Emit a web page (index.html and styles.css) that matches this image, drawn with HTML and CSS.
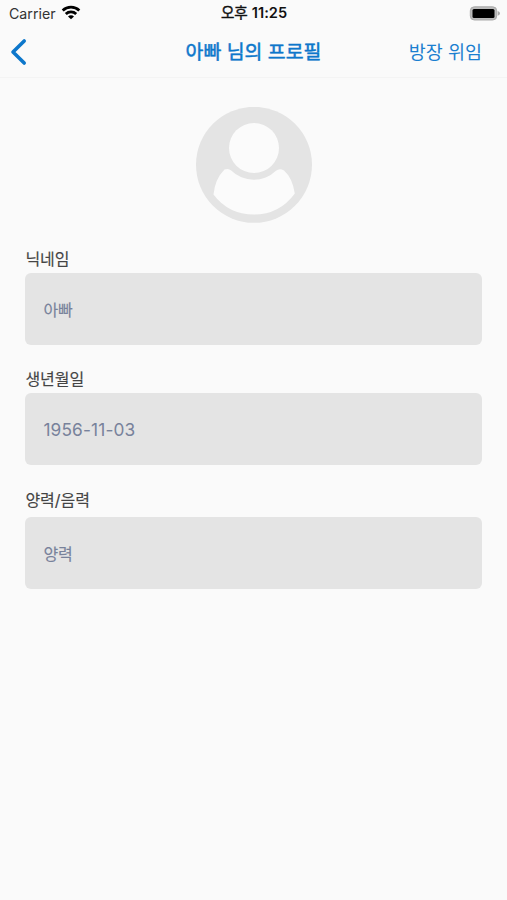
FILE: index.html
```html
<!DOCTYPE html>
<html lang="ko">
<head>
<meta charset="utf-8">
<title>프로필</title>
<link rel="stylesheet" href="styles.css">
</head>
<body>
<div class="status">
  <div class="carrier"><span>Carrier</span>
    <svg class="wifi" width="20" height="15" viewBox="0 0 20 15" fill="none" stroke="#000" stroke-width="2.8"><path d="M1.7 5.4a12 12 0 0 1 16.6 0"/><path d="M4.8 8.9a7.5 7.5 0 0 1 10.4 0"/><path d="M10 14.2 7 11.4a4.2 4.2 0 0 1 6 0z" fill="#000" stroke="none"/></svg>
  </div>
  <div class="time">오후 <b>11:25</b></div>
  <svg class="battery" width="32" height="16" viewBox="0 0 32 16"><rect x="1.3" y=".8" width="26.4" height="13.2" rx="4" fill="#bbb" stroke="#aaa"/><rect x="3.5" y="2.9" width="22" height="9" rx="1.5" fill="#000"/><path d="M28.7 5q2.3 1 2.3 2.4t-2.3 2.4z" fill="#aaa"/></svg>
</div>
<header class="nav">
  <svg class="back" width="18" height="28" viewBox="0 0 18 28" fill="none" stroke="#0d77cb" stroke-width="3.6" stroke-linecap="round" stroke-linejoin="round"><path d="M15.2 3 4 14l11.2 11"/></svg>
  <h1 class="title">아빠 님의 프로필</h1>
  <span class="action">방장 위임</span>
</header>
<main class="content">
  <svg class="avatar" width="118" height="117" viewBox="0 0 118 117"><circle cx="59" cy="57.8" r="58" fill="#e4e4e4"/><circle cx="59" cy="41" r="25" fill="#fbfbfb"/><path transform="translate(.5)" d="M29 62.5Q33 61 35.7 63.5A32 32 0 0 0 80.5 63.8Q84 60.8 88.5 63.5Q97 71 99.3 86.5Q84 107.5 58.5 107.5T18 87.5Q19.5 72 29 62.5Z" fill="#fbfbfb"/></svg>
  <section class="field"><div class="label">닉네임</div><div class="box">아빠</div></section>
  <section class="field"><div class="label">생년월일</div><div class="box date">1956-11-03</div></section>
  <section class="field last"><div class="label">양력/음력</div><div class="box">양력</div></section>
</main>
</body>
</html>
```
FILE: styles.css
```css
* { box-sizing: border-box; }
body {
  margin: 0;
  min-height: 900px;
  background: #fafafa;
  color: #444;
  font-family: Inter, "Noto Sans CJK KR", sans-serif;
}
.status {
  display: grid;
  grid-template-columns: 1fr auto 1fr;
  align-items: center;
  height: 27px;
  padding: 0 6px 0 9px;
  font-size: 14.2px;
  line-height: 27px;
  color: #111;
}
.carrier { display: flex; align-items: center; gap: 5px; color: #333; }
.wifi { display: block; margin-top: -2px; }
.time {
  margin-left: -2px;
  font-size: 14.6px;
  -webkit-text-stroke: 0.4px #111;
}
.time b { font-weight: 600; -webkit-text-stroke: 0; }
.battery { justify-self: end; }
.nav {
  display: grid;
  grid-template-columns: 1fr auto 1fr;
  align-items: center;
  height: 51px;
  padding: 0 25px 0 9px;
  border-bottom: 1px solid #f4f4f4;
  color: #0d77cb;
}
.back { display: block; }
.title {
  margin: 0 0 0 16px;
  font-size: 19.4px;
  font-weight: 400;
  line-height: 28px;
  white-space: nowrap;
  -webkit-text-stroke: 0.5px #0d77cb;
}
.action { justify-self: end; font-size: 18.5px; line-height: 28px; color: #1a7fd0; }
.content { padding: 29px 24.6px 0 25.4px; }
.avatar { display: block; margin: 0 auto 22.4px; }
.field { margin-bottom: 21px; }
.label { height: 26.5px; padding-top: 1px; font-size: 16px; line-height: 24px; -webkit-text-stroke: 0.15px #444; }
.box {
  height: 72.5px;
  padding: 1px 18px 0;
  border-radius: 6px;
  background: #e4e4e4;
  color: #78829b;
  font-size: 16px;
  line-height: 72px;
  -webkit-text-stroke: 0.15px #78829b;
}
.date { font-size: 17.3px; letter-spacing: 0.15px; -webkit-text-stroke: 0; }
.last { margin-top: 22.4px; }
.last .label { height: 29px; padding-top: 0; }
```
